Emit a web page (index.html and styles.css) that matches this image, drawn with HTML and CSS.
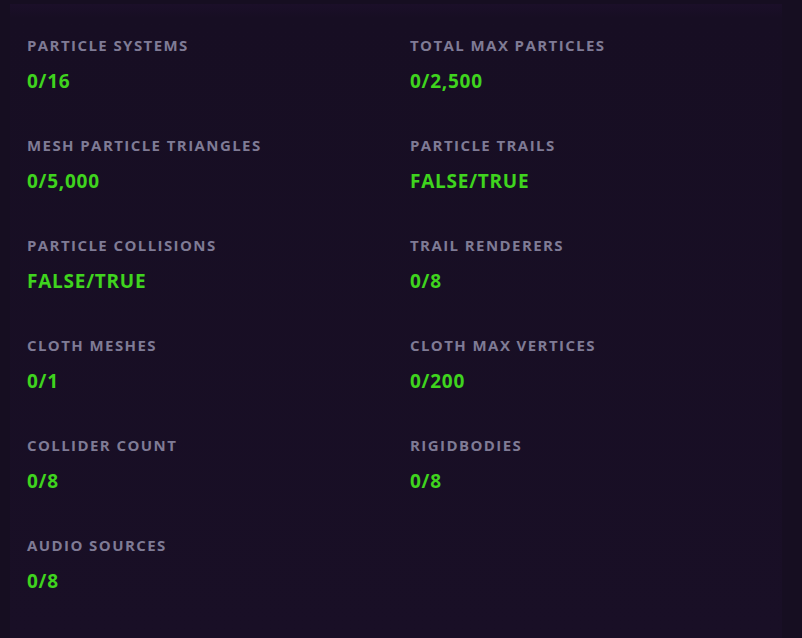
FILE: index.html
```html
<!DOCTYPE html>
<html>
<head>
<meta charset="utf-8">
<link rel="stylesheet" href="styles.css">
</head>
<body>
<div class="panel">
  <div class="grid">
    <div class="stat"><div class="label">Particle Systems</div><div class="value">0/16</div></div>
    <div class="stat"><div class="label">Total Max Particles</div><div class="value">0/2,500</div></div>
    <div class="stat"><div class="label">Mesh Particle Triangles</div><div class="value">0/5,000</div></div>
    <div class="stat"><div class="label">Particle Trails</div><div class="value">FALSE/TRUE</div></div>
    <div class="stat"><div class="label">Particle Collisions</div><div class="value">FALSE/TRUE</div></div>
    <div class="stat"><div class="label">Trail Renderers</div><div class="value">0/8</div></div>
    <div class="stat"><div class="label">Cloth Meshes</div><div class="value">0/1</div></div>
    <div class="stat"><div class="label">Cloth Max Vertices</div><div class="value">0/200</div></div>
    <div class="stat"><div class="label">Collider Count</div><div class="value">0/8</div></div>
    <div class="stat"><div class="label">Rigidbodies</div><div class="value">0/8</div></div>
    <div class="stat"><div class="label">Audio Sources</div><div class="value">0/8</div></div>
  </div>
</div>
</body>
</html>
```

FILE: styles.css
```css
html, body {
  margin: 0;
  padding: 0;
}
body {
  background: #160e21;
  font-family: "Open Sans", "Noto Sans", sans-serif;
  width: 802px;
  height: 638px;
  overflow: hidden;
}
.panel {
  margin: 4px 20px 0 10px;
  height: 634px;
  box-sizing: border-box;
  background: linear-gradient(180deg, #1b0f29 0px, #170e23 14px, #190f26 100%);
  padding: 31px 0 0 17px;
}
.grid {
  display: grid;
  grid-template-columns: 383px 1fr;
  grid-auto-rows: 100px;
}
.stat {
  display: flex;
  flex-direction: column;
  gap: 15px;
}
.label {
  color: #7f7b95;
  font-size: 15px;
  font-weight: 700;
  letter-spacing: 1.42px;
  text-transform: uppercase;
  line-height: 20px;
}
.value {
  color: #3fd41e;
  font-size: 19px;
  font-weight: 700;
  line-height: 23px;
  letter-spacing: 0.75px;
}
```
